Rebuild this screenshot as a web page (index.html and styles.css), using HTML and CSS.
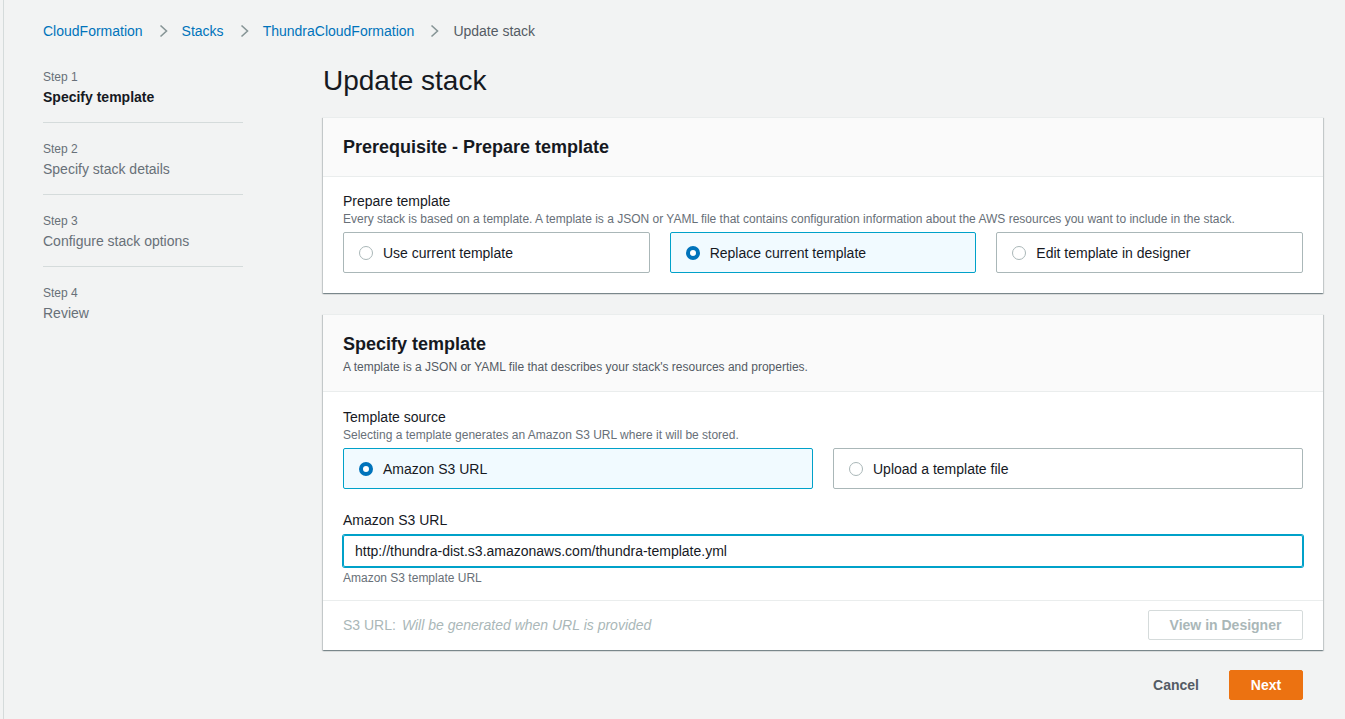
FILE: index.html
```html
<!DOCTYPE html>
<html lang="en">
<head>
<meta charset="utf-8">
<title>Update stack</title>
<link rel="stylesheet" href="styles.css">
</head>
<body>
<div class="page">
  <nav class="breadcrumbs">
    <a class="crumb" href="#">CloudFormation</a>
    <svg class="sep" width="12" height="14" viewBox="0 0 12 14"><path d="M3.5 1.5l6 5.5-6 5.5" fill="none" stroke="#879596" stroke-width="1.6"/></svg>
    <a class="crumb" href="#">Stacks</a>
    <svg class="sep" width="12" height="14" viewBox="0 0 12 14"><path d="M3.5 1.5l6 5.5-6 5.5" fill="none" stroke="#879596" stroke-width="1.6"/></svg>
    <a class="crumb" href="#">ThundraCloudFormation</a>
    <svg class="sep" width="12" height="14" viewBox="0 0 12 14"><path d="M3.5 1.5l6 5.5-6 5.5" fill="none" stroke="#879596" stroke-width="1.6"/></svg>
    <span class="crumb-current">Update stack</span>
  </nav>

  <div class="layout">
    <ol class="steps">
      <li class="step active"><div class="step-num">Step 1</div><div class="step-label">Specify template</div></li>
      <li class="step"><div class="step-num">Step 2</div><div class="step-label">Specify stack details</div></li>
      <li class="step"><div class="step-num">Step 3</div><div class="step-label">Configure stack options</div></li>
      <li class="step last"><div class="step-num">Step 4</div><div class="step-label">Review</div></li>
    </ol>

    <main class="main">
      <h1 class="title">Update stack</h1>

      <section class="card">
        <div class="card-header">
          <h2 class="card-title">Prerequisite - Prepare template</h2>
        </div>
        <div class="card-body">
          <div class="field-label">Prepare template</div>
          <div class="field-desc">Every stack is based on a template. A template is a JSON or YAML file that contains configuration information about the AWS resources you want to include in the stack.</div>
          <div class="tiles three">
            <label class="tile"><span class="radio"></span>Use current template</label>
            <label class="tile selected"><span class="radio checked"></span>Replace current template</label>
            <label class="tile"><span class="radio"></span>Edit template in designer</label>
          </div>
        </div>
      </section>

      <section class="card">
        <div class="card-header">
          <h2 class="card-title">Specify template</h2>
          <div class="card-desc">A template is a JSON or YAML file that describes your stack's resources and properties.</div>
        </div>
        <div class="card-body with-footer">
          <div class="field-label">Template source</div>
          <div class="field-desc">Selecting a template generates an Amazon S3 URL where it will be stored.</div>
          <div class="tiles two">
            <label class="tile selected"><span class="radio checked"></span>Amazon S3 URL</label>
            <label class="tile"><span class="radio"></span>Upload a template file</label>
          </div>
          <div class="field-label spaced">Amazon S3 URL</div>
          <div class="input">http://thundra-dist.s3.amazonaws.com/thundra-template.yml</div>
          <div class="field-hint">Amazon S3 template URL</div>
        </div>
        <div class="card-footer">
          <div class="s3-url"><span class="s3-key">S3 URL:</span><span class="s3-val">Will be generated when URL is provided</span></div>
          <button class="btn-disabled">View in Designer</button>
        </div>
      </section>

      <div class="actions">
        <button class="btn-link">Cancel</button>
        <button class="btn-primary">Next</button>
      </div>
    </main>
  </div>
</div>
</body>
</html>
```

FILE: styles.css
```css
* { box-sizing: border-box; }

html, body {
  margin: 0;
  padding: 0;
  background: #f2f3f3;
  font-family: "Liberation Sans", Arial, sans-serif;
  color: #16191f;
  font-size: 14px;
}

.page {
  margin-left: 3px;
  border-left: 1px solid #d5dbdb;
  min-height: 719px;
  padding: 20px 0 0 39px;
}

.breadcrumbs {
  display: flex;
  align-items: center;
  height: 22px;
  line-height: 22px;
}

.crumb {
  color: #0073bb;
  text-decoration: none;
}

.crumb-current {
  color: #545b64;
}

.sep {
  margin: 0 13px 0 14px;
  display: block;
}

.layout {
  display: grid;
  grid-template-columns: 200px 1000px;
  column-gap: 80px;
  margin-top: 20px;
}

.steps {
  list-style: none;
  margin: 0;
  padding: 0;
}

.step {
  padding: 18px 0 14px;
  border-bottom: 1px solid #d5dbdb;
}

.step:first-child {
  padding-top: 7px;
}

.step.last {
  border-bottom: none;
}

.step-num {
  font-size: 12px;
  line-height: 16px;
  color: #687078;
}

.step-label {
  font-size: 14px;
  line-height: 22px;
  color: #687078;
  margin-top: 1px;
}

.step.active .step-label {
  color: #16191f;
  font-weight: bold;
}

.main {
  display: flex;
  flex-direction: column;
}

.title {
  margin: 0 0 17px;
  font-size: 28px;
  line-height: 38px;
  font-weight: normal;
  color: #16191f;
}

.card {
  background: #fff;
  border-top: 1px solid #eaeded;
  box-shadow: 0 1px 1px 0 rgba(0, 28, 36, 0.3), 1px 1px 1px 0 rgba(0, 28, 36, 0.15), -1px 1px 1px 0 rgba(0, 28, 36, 0.15);
  margin-bottom: 21px;
}

.card + .card {
  margin-bottom: 20px;
}

.card-header {
  background: #fafafa;
  border-bottom: 1px solid #eaeded;
  padding: 16px 20px 16px;
}

.card-title {
  margin: 0;
  font-size: 18px;
  line-height: 26px;
  font-weight: bold;
}

.card-desc {
  font-size: 12px;
  line-height: 16px;
  color: #545b64;
  margin-top: 2px;
}

.card-body {
  padding: 14px 20px 20px;
}

.card-body.with-footer {
  padding: 15px 20px 14px;
  border-bottom: 1px solid #eaeded;
}

.field-label {
  font-size: 14px;
  line-height: 20px;
}

.field-label.spaced {
  margin-top: 21px;
}

.field-desc {
  font-size: 12px;
  line-height: 16px;
  color: #687078;
}

.tiles {
  display: grid;
  column-gap: 20px;
  margin-top: 5px;
}

.tiles.three { grid-template-columns: 1fr 1fr 1fr; }
.tiles.two { grid-template-columns: 1fr 1fr; }

.tile {
  display: flex;
  align-items: center;
  height: 41px;
  padding-left: 15px;
  border: 1px solid #aab7b8;
  border-radius: 2px;
  font-size: 14px;
  background: #fff;
}

.tile.selected {
  background: #f1faff;
  border-color: #00a1c9;
}

.radio {
  width: 14px;
  height: 14px;
  border-radius: 50%;
  border: 1px solid #aab7b8;
  margin-right: 10px;
  flex: none;
  background: #fff;
}

.radio.checked {
  border: 4px solid #0073bb;
}

.input {
  margin-top: 5px;
  height: 32px;
  line-height: 30px;
  border: 1px solid #00a1c9;
  box-shadow: 0 0 0 1px #00a1c9;
  border-radius: 2px;
  padding: 0 11px;
  font-size: 14px;
  color: #16191f;
}

.field-hint {
  margin-top: 3px;
  font-size: 12px;
  line-height: 16px;
  color: #687078;
}

.card-footer {
  display: flex;
  justify-content: space-between;
  align-items: center;
  padding: 9px 20px 10px;
}

.s3-url {
  font-size: 14px;
  color: #aab7b8;
}

.s3-key {
  margin-right: 6px;
}

.s3-val {
  font-style: italic;
}

.btn-disabled {
  height: 30px;
  width: 155px;
  border: 1px solid #d5dbdb;
  border-radius: 2px;
  background: #fff;
  color: #aab7b8;
  font-family: inherit;
  font-weight: bold;
  font-size: 14px;
}

.actions {
  display: flex;
  justify-content: flex-end;
  align-items: center;
  padding-right: 20px;
}

.btn-link {
  background: none;
  border: none;
  font-family: inherit;
  font-weight: bold;
  font-size: 14px;
  color: #545b64;
  padding: 0 20px;
  height: 30px;
  margin-right: 10px;
}

.btn-primary {
  background: #ec7211;
  border: 1px solid #ec7211;
  border-radius: 2px;
  color: #fff;
  font-family: inherit;
  font-weight: bold;
  font-size: 14px;
  height: 30px;
  width: 74px;
}
```
